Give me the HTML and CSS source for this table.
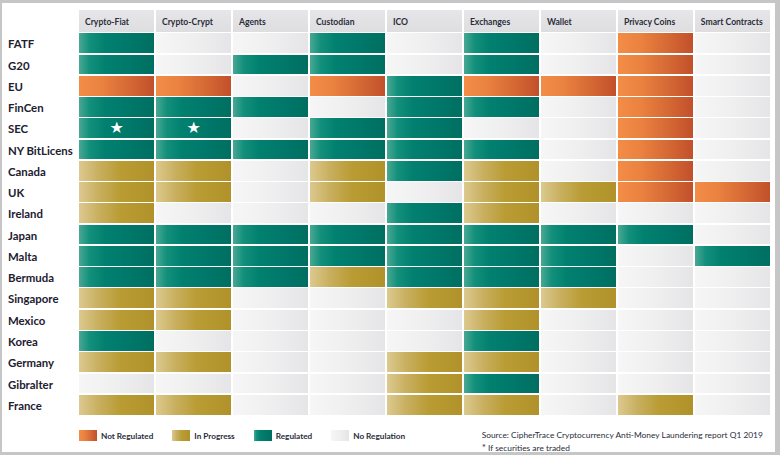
FILE: index.html
```html
<!DOCTYPE html>
<html>
<head>
<meta charset="utf-8">
<link rel="stylesheet" href="styles.css">
</head>
<body>
<div class="page">
  <div class="chart">
    <div class="corner"></div>
    <div class="head">Crypto-Fiat</div>
    <div class="head">Crypto-Crypt</div>
    <div class="head">Agents</div>
    <div class="head">Custodian</div>
    <div class="head">ICO</div>
    <div class="head">Exchanges</div>
    <div class="head">Wallet</div>
    <div class="head">Privacy Coins</div>
    <div class="head">Smart Contracts</div>

    <div class="label">FATF</div>
    <div class="c r"></div><div class="c x"></div><div class="c x"></div><div class="c r"></div><div class="c x"></div><div class="c r"></div><div class="c x"></div><div class="c n"></div><div class="c x"></div>

    <div class="label">G20</div>
    <div class="c r"></div><div class="c x"></div><div class="c r"></div><div class="c r"></div><div class="c x"></div><div class="c r"></div><div class="c x"></div><div class="c n"></div><div class="c x"></div>

    <div class="label">EU</div>
    <div class="c n"></div><div class="c n"></div><div class="c x"></div><div class="c n"></div><div class="c r"></div><div class="c n"></div><div class="c n"></div><div class="c n"></div><div class="c x"></div>

    <div class="label">FinCen</div>
    <div class="c r"></div><div class="c r"></div><div class="c r"></div><div class="c x"></div><div class="c r"></div><div class="c r"></div><div class="c x"></div><div class="c n"></div><div class="c x"></div>

    <div class="label">SEC</div>
    <div class="c r"><span class="star">★</span></div><div class="c r"><span class="star">★</span></div><div class="c x"></div><div class="c r"></div><div class="c r"></div><div class="c x"></div><div class="c x"></div><div class="c n"></div><div class="c x"></div>

    <div class="label">NY BitLicens</div>
    <div class="c r"></div><div class="c r"></div><div class="c r"></div><div class="c r"></div><div class="c r"></div><div class="c r"></div><div class="c x"></div><div class="c n"></div><div class="c x"></div>

    <div class="label">Canada</div>
    <div class="c p"></div><div class="c p"></div><div class="c x"></div><div class="c p"></div><div class="c r"></div><div class="c p"></div><div class="c x"></div><div class="c n"></div><div class="c x"></div>

    <div class="label">UK</div>
    <div class="c p"></div><div class="c p"></div><div class="c x"></div><div class="c p"></div><div class="c x"></div><div class="c p"></div><div class="c p"></div><div class="c n"></div><div class="c n"></div>

    <div class="label">Ireland</div>
    <div class="c p"></div><div class="c x"></div><div class="c x"></div><div class="c x"></div><div class="c r"></div><div class="c p"></div><div class="c x"></div><div class="c x"></div><div class="c x"></div>

    <div class="label">Japan</div>
    <div class="c r"></div><div class="c r"></div><div class="c r"></div><div class="c r"></div><div class="c r"></div><div class="c r"></div><div class="c r"></div><div class="c r"></div><div class="c x"></div>

    <div class="label">Malta</div>
    <div class="c r"></div><div class="c r"></div><div class="c r"></div><div class="c r"></div><div class="c r"></div><div class="c r"></div><div class="c r"></div><div class="c x"></div><div class="c r"></div>

    <div class="label">Bermuda</div>
    <div class="c r"></div><div class="c r"></div><div class="c r"></div><div class="c p"></div><div class="c r"></div><div class="c r"></div><div class="c r"></div><div class="c x"></div><div class="c x"></div>

    <div class="label">Singapore</div>
    <div class="c p"></div><div class="c p"></div><div class="c x"></div><div class="c x"></div><div class="c p"></div><div class="c p"></div><div class="c p"></div><div class="c x"></div><div class="c x"></div>

    <div class="label">Mexico</div>
    <div class="c p"></div><div class="c p"></div><div class="c x"></div><div class="c x"></div><div class="c x"></div><div class="c p"></div><div class="c x"></div><div class="c x"></div><div class="c x"></div>

    <div class="label">Korea</div>
    <div class="c r"></div><div class="c x"></div><div class="c x"></div><div class="c x"></div><div class="c x"></div><div class="c r"></div><div class="c x"></div><div class="c x"></div><div class="c x"></div>

    <div class="label">Germany</div>
    <div class="c p"></div><div class="c p"></div><div class="c x"></div><div class="c x"></div><div class="c p"></div><div class="c p"></div><div class="c x"></div><div class="c x"></div><div class="c x"></div>

    <div class="label">Gibralter</div>
    <div class="c x"></div><div class="c x"></div><div class="c x"></div><div class="c x"></div><div class="c p"></div><div class="c r"></div><div class="c x"></div><div class="c x"></div><div class="c x"></div>

    <div class="label">France</div>
    <div class="c p"></div><div class="c p"></div><div class="c x"></div><div class="c x"></div><div class="c p"></div><div class="c p"></div><div class="c x"></div><div class="c p"></div><div class="c x"></div>
  </div>

  <div class="footer">
    <div class="legend">
      <div class="item"><span class="swatch n"></span>Not Regulated</div>
      <div class="item"><span class="swatch p"></span>In Progress</div>
      <div class="item"><span class="swatch r"></span>Regulated</div>
      <div class="item"><span class="swatch x"></span>No Regulation</div>
    </div>
    <div class="source">
      <div>Source: CipherTrace Cryptocurrency Anti-Money Laundering report Q1 2019</div>
      <div class="note"><span class="ast">*</span> If securities are traded</div>
    </div>
  </div>
</div>
</body>
</html>
```

FILE: styles.css
```css
html, body {
  margin: 0;
  padding: 0;
}

body {
  background: #c6c6c6;
  width: 780px;
  height: 455px;
  overflow: hidden;
  font-family: Lato, "Open Sans", sans-serif;
  color: #1f2330;
}

.page {
  background: #ffffff;
  margin: 3px 5px 0 2px;
  height: 449px;
  overflow: hidden;
}

.chart {
  display: grid;
  grid-template-columns: repeat(10, 75.3px);
  grid-template-rows: 21.8px;
  grid-auto-rows: 19.78px;
  column-gap: 1.7px;
  row-gap: 1.5px;
  padding-top: 7px;
}

.head {
  background: linear-gradient(to bottom, #e6e6e8, #dedee0);
  font-size: 8.6px;
  font-weight: 700;
  color: #2a2d3a;
  display: flex;
  align-items: center;
  padding: 3px 0 0 6px;
  white-space: nowrap;
}

.label {
  font-size: 11.4px;
  font-weight: 700;
  color: #1d2030;
  padding: 4px 0 0 6px;
  white-space: nowrap;
  line-height: 14px;
}

.c {
  display: flex;
  align-items: center;
  justify-content: center;
}

.r {
  background: linear-gradient(to right, #4aa893 0%, #12907c 14%, #02806f 35%, #00786a 65%, #006f61 100%);
}

.n {
  background: linear-gradient(to right, #f28d47 0%, #ea8240 30%, #d66a35 65%, #c2502b 100%);
}

.p {
  background: linear-gradient(to right, #dcc98f 0%, #c9b061 25%, #b99c34 55%, #b1922a 100%);
}

.x {
  background: linear-gradient(to right, #f6f6f6 0%, #efeff0 50%, #e5e5e7 100%);
}

.star {
  color: #ffffff;
  font-family: "DejaVu Sans", sans-serif;
  font-size: 16px;
  line-height: 1;
}

.footer {
  display: flex;
  align-items: flex-start;
  margin-top: 15.5px;
  padding-left: 77px;
}

.legend {
  display: flex;
  align-items: center;
  width: 402.7px;
  height: 11px;
}

.item {
  display: flex;
  align-items: center;
  font-size: 8.2px;
  font-weight: 700;
  color: #2a2d3a;
  margin-right: 19px;
  white-space: nowrap;
}

.swatch {
  display: block;
  width: 18px;
  height: 11px;
  margin-right: 4px;
}

.source {
  font-size: 8.4px;
  color: #2a2d3a;
  line-height: 12px;
  margin-top: -1px;
  white-space: nowrap;
}

.note {
  margin-top: 0;
}

.ast {
  font-size: 10px;
}
```
